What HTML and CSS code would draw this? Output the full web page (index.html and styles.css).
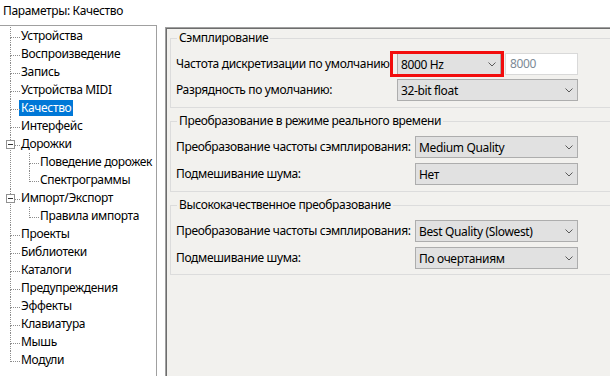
FILE: index.html
```html
<!DOCTYPE html>
<html lang="ru">
<head>
<meta charset="utf-8">
<title>Параметры: Качество</title>
<link rel="stylesheet" href="styles.css">
</head>
<body>
<div class="window">
  <header class="title">Параметры: Качество</header>
  <div class="main">
    <nav class="tree">
      <ul class="tree-root">
        <li><span class="label">Устройства</span></li>
        <li><span class="label">Воспроизведение</span></li>
        <li><span class="label">Запись</span></li>
        <li><span class="label">Устройства MIDI</span></li>
        <li><span class="label selected">Качество</span></li>
        <li><span class="label">Интерфейс</span></li>
        <li class="parent"><span class="toggle"></span><span class="label">Дорожки</span>
          <ul>
            <li><span class="label">Поведение дорожек</span></li>
            <li><span class="label">Спектрограммы</span></li>
          </ul>
        </li>
        <li class="parent"><span class="toggle"></span><span class="label">Импорт/Экспорт</span>
          <ul>
            <li><span class="label">Правила импорта</span></li>
          </ul>
        </li>
        <li><span class="label">Проекты</span></li>
        <li><span class="label">Библиотеки</span></li>
        <li><span class="label">Каталоги</span></li>
        <li><span class="label">Предупреждения</span></li>
        <li><span class="label">Эффекты</span></li>
        <li><span class="label">Клавиатура</span></li>
        <li><span class="label">Мышь</span></li>
        <li><span class="label">Модули</span></li>
      </ul>
    </nav>
    <section class="panel">
      <fieldset class="group g1">
        <legend>Сэмплирование</legend>
        <div class="rows">
          <span class="field-label">Частота дискретизации по умолчанию:</span>
          <div class="rate">
            <div class="combo w-rate marked">
              <span>8000 Hz</span>
              <svg class="chev" width="8" height="5" viewBox="0 0 8 5"><polyline points="0.5,0.5 4,4 7.5,0.5" fill="none" stroke="#5a5a5a" stroke-width="1"/></svg>
            </div>
            <div class="textbox">8000</div>
          </div>
          <span class="field-label">Разрядность по умолчанию:</span>
          <div class="combo w-g1">
            <span>32-bit float</span>
            <svg class="chev" width="8" height="5" viewBox="0 0 8 5"><polyline points="0.5,0.5 4,4 7.5,0.5" fill="none" stroke="#5a5a5a" stroke-width="1"/></svg>
          </div>
        </div>
      </fieldset>
      <fieldset class="group g2">
        <legend>Преобразование в режиме реального времени</legend>
        <div class="rows">
          <span class="field-label">Преобразование частоты сэмплирования:</span>
          <div class="combo w-g2">
            <span>Medium Quality</span>
            <svg class="chev" width="8" height="5" viewBox="0 0 8 5"><polyline points="0.5,0.5 4,4 7.5,0.5" fill="none" stroke="#5a5a5a" stroke-width="1"/></svg>
          </div>
          <span class="field-label">Подмешивание шума:</span>
          <div class="combo w-g2">
            <span>Нет</span>
            <svg class="chev" width="8" height="5" viewBox="0 0 8 5"><polyline points="0.5,0.5 4,4 7.5,0.5" fill="none" stroke="#5a5a5a" stroke-width="1"/></svg>
          </div>
        </div>
      </fieldset>
      <fieldset class="group g3">
        <legend>Высококачественное преобразование</legend>
        <div class="rows">
          <span class="field-label">Преобразование частоты сэмплирования:</span>
          <div class="combo w-g2">
            <span>Best Quality (Slowest)</span>
            <svg class="chev" width="8" height="5" viewBox="0 0 8 5"><polyline points="0.5,0.5 4,4 7.5,0.5" fill="none" stroke="#5a5a5a" stroke-width="1"/></svg>
          </div>
          <span class="field-label">Подмешивание шума:</span>
          <div class="combo w-g2">
            <span>По очертаниям</span>
            <svg class="chev" width="8" height="5" viewBox="0 0 8 5"><polyline points="0.5,0.5 4,4 7.5,0.5" fill="none" stroke="#5a5a5a" stroke-width="1"/></svg>
          </div>
        </div>
      </fieldset>
    </section>
  </div>
</div>
</body>
</html>
```

FILE: styles.css
```css
* { box-sizing: border-box; }

html, body {
  margin: 0;
  padding: 0;
  background: #ffffff;
  overflow: hidden;
}

body {
  width: 610px;
  height: 376px;
  font-family: "Noto Sans", "Open Sans", sans-serif;
  font-size: 12px;
  letter-spacing: -0.35px;
  color: #000;
}

.window {
  display: flex;
  flex-direction: column;
  height: 376px;
}

.title {
  height: 25px;
  line-height: 22px;
  padding-left: 3px;
  white-space: nowrap;
}

.main {
  flex: 1;
  display: flex;
  gap: 8px;
  min-height: 0;
}

/* ---------- tree ---------- */
.tree {
  flex: 0 0 157px;
  border-top: 1px solid #a0a0a0;
  border-right: 1px solid #a0a0a0;
  padding-top: 1px;
  background: #fff;
  overflow: hidden;
}

.tree ul {
  list-style: none;
  margin: 0;
  padding: 0;
}

.tree li {
  position: relative;
  padding-left: 19px;
  white-space: nowrap;
}

.tree li::before {
  content: "";
  position: absolute;
  left: 10px;
  top: 0;
  width: 9px;
  height: 10px;
  border-left: 1px dotted #8c8c8c;
  border-bottom: 1px dotted #8c8c8c;
}

.tree li:not(:last-child)::after {
  content: "";
  position: absolute;
  left: 10px;
  top: 10px;
  bottom: 0;
  border-left: 1px dotted #8c8c8c;
}

.tree .label {
  display: inline-block;
  height: 16px;
  line-height: 16px;
  margin: 1px 0;
  padding: 0 2px;
  vertical-align: top;
}

.tree .label.selected {
  background: #0078d7;
  color: #fff;
}

.tree .toggle {
  position: absolute;
  left: 6px;
  top: 5px;
  width: 9px;
  height: 9px;
  border: 1px solid #919191;
  background: #fff;
  z-index: 1;
}

.tree .toggle::after {
  content: "";
  position: absolute;
  left: 1px;
  top: 3px;
  width: 5px;
  height: 1px;
  background: #333;
}

/* ---------- panel ---------- */
.panel {
  flex: 0 0 470px;
  margin-top: 2px;
  background: #f2f1ee;
  border-top: 1px solid #a0a0a0;
  border-left: 1px solid #a0a0a0;
  box-shadow: inset 1px 1px 0 #6d6d6d;
  padding: 2px 0 0 2px;
}

.group {
  border: 1px solid #dcdcdc;
  margin: 0 0 5px 2px;
  padding: 7px 0 6px 0;
  min-width: 0;
}

.group legend {
  margin-left: 6px;
  padding: 0 2px;
  line-height: 16px;
  height: 16px;
}

.rows {
  display: grid;
  align-items: center;
  padding-left: 5px;
  row-gap: 5px;
}

.g1 .rows {
  grid-template-columns: 221px auto;
  row-gap: 4px;
}

.g2 .rows,
.g3 .rows {
  grid-template-columns: 239px auto;
}

.g3 {
  padding-bottom: 5px;
}

.field-label {
  white-space: nowrap;
  line-height: 16px;
}

.rate {
  display: flex;
  align-items: center;
  gap: 4px;
}

.combo {
  position: relative;
  height: 22px;
  display: flex;
  align-items: center;
  justify-content: space-between;
  padding: 0 4px 0 3px;
  background: #e1e1e1;
  border: 1px solid #adadad;
  white-space: nowrap;
}

.combo .chev {
  flex: none;
}

.w-rate { width: 104px; }
.w-g1 { width: 181px; }
.w-g2 { width: 163px; }

.marked::after {
  content: "";
  position: absolute;
  left: -8px;
  right: -4px;
  top: -3px;
  bottom: -3px;
  border: 3px solid #f20d0d;
  pointer-events: none;
}

.textbox {
  width: 73px;
  height: 22px;
  line-height: 20px;
  padding-left: 4px;
  border: 1px solid #d9d9d9;
  background: #fff;
  color: #7d8a96;
}
```
